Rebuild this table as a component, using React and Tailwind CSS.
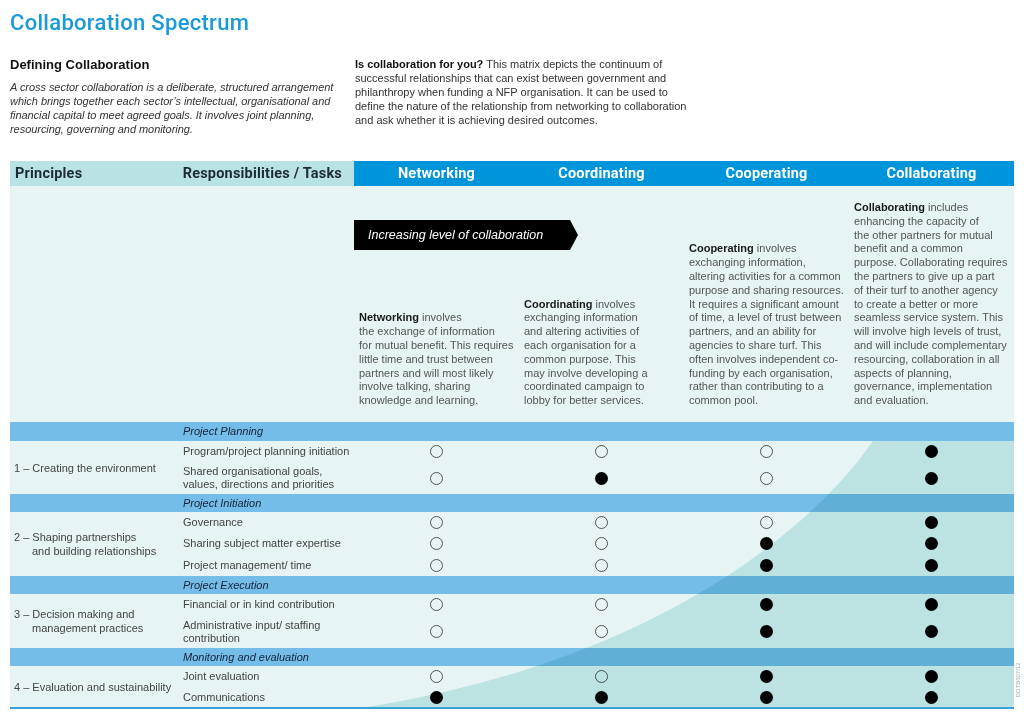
import React from "react";

const SANS = "font-['Liberation_Sans',Arial,sans-serif]";
const DIN = "font-['Roboto',sans-serif]";

const sections = [
  {
    band: "Project Planning",
    bandH: "h-[19px]",
    label: ["1 – Creating the environment"],
    tasks: [
      { t: ["Program/project planning initiation"], h: "h-[21px]", v: [0, 0, 0, 1] },
      { t: ["Shared organisational goals,", "values, directions and priorities"], h: "h-[32px]", v: [0, 1, 0, 1] },
    ],
  },
  {
    band: "Project Initiation",
    bandH: "h-[18px]",
    label: ["2 – Shaping partnerships", "and building relationships"],
    tasks: [
      { t: ["Governance"], h: "h-[21px]", v: [0, 0, 0, 1] },
      { t: ["Sharing subject matter expertise"], h: "h-[21px]", v: [0, 0, 1, 1] },
      { t: ["Project management/ time"], h: "h-[22px]", v: [0, 0, 1, 1] },
    ],
  },
  {
    band: "Project Execution",
    bandH: "h-[18px]",
    label: ["3 – Decision making and", "management practices"],
    tasks: [
      { t: ["Financial or in kind contribution"], h: "h-[21px]", v: [0, 0, 1, 1] },
      { t: ["Administrative input/ staffing", "contribution"], h: "h-[33px]", v: [0, 0, 1, 1] },
    ],
  },
  {
    band: "Monitoring and evaluation",
    bandH: "h-[18px]",
    label: ["4 – Evaluation and sustainability"],
    tasks: [
      { t: ["Joint evaluation"], h: "h-[21px]", v: [0, 0, 1, 1] },
      { t: ["Communications"], h: "h-[20px]", v: [1, 1, 1, 1] },
    ],
  },
];

function Dot({ filled }) {
  return filled ? (
    <div className="w-[13px] h-[13px] rounded-full bg-black" />
  ) : (
    <div className="w-[13px] h-[13px] rounded-full border border-[#555]" />
  );
}

function Desc({ name, rest, lines }) {
  return (
    <div className={`${SANS} text-[11px] leading-[13.8px] text-[#555] whitespace-nowrap`}>
      <div>
        <span className="font-bold text-[#1a1a1a]">{name}</span> {rest}
      </div>
      {lines.map((l, i) => (
        <div key={i}>{l}</div>
      ))}
    </div>
  );
}

export default function App() {
  return (
    <div className="relative w-[1024px] h-[718px] bg-white px-[10px] overflow-hidden">
      <h1 className={`${DIN} pt-[9px] text-[22px] leading-[28px] font-medium text-[#1a9bd7] tracking-[0.3px]`}>
        Collaboration Spectrum
      </h1>

      <div className="flex mt-[18px]">
        <div className="w-[345px]">
          <h2 className={`${SANS} font-bold text-[13px] leading-[20px] text-[#111]`}>
            Defining Collaboration
          </h2>
          <p className={`${SANS} italic text-[11px] leading-[14px] text-[#333] mt-[5px] whitespace-nowrap tracking-[-0.05px]`}>
            A cross sector collaboration is a deliberate, structured arrangement
            <br />
            which brings together each sector’s intellectual, organisational and
            <br />
            financial capital to meet agreed goals. It involves joint planning,
            <br />
            resourcing, governing and monitoring.
          </p>
        </div>
        <p className={`${SANS} text-[11px] leading-[14px] text-[#333] pt-[2px] whitespace-nowrap`}>
          <span className="font-bold text-[#111]">Is collaboration for you?</span> This matrix depicts the continuum of
          <br />
          successful relationships that can exist between government and
          <br />
          philanthropy when funding a NFP organisation. It can be used to
          <br />
          define the nature of the relationship from networking to collaboration
          <br />
          and ask whether it is achieving desired outcomes.
        </p>
      </div>

      {/* Table */}
      <div className="mt-[25px] w-[1004px]">
        {/* header */}
        <div className={`${DIN} flex h-[25px] text-[14.5px] font-bold tracking-[0.2px]`}>
          <div className="w-[344px] flex items-center justify-between bg-[#b9e2e4] text-[#1e2b36] pl-[5px] pr-[12px]">
            <span>Principles</span>
            <span>Responsibilities / Tasks</span>
          </div>
          <div className="flex-1 flex bg-[#0095da] text-white">
            {["Networking", "Coordinating", "Cooperating", "Collaborating"].map((h) => (
              <div key={h} className="w-[165px] flex items-center justify-center">
                {h}
              </div>
            ))}
          </div>
        </div>

        {/* description area */}
        <div className="flex h-[236px] bg-[#e6f4f4] pb-[14px]">
          <div className="w-[344px]" />
          <div className="w-[330px] flex flex-col">
            <div className="mt-[34px] w-[224px] h-[30px] bg-black flex items-center pl-[14px] [clip-path:polygon(0_0,calc(100%-8px)_0,100%_50%,calc(100%-8px)_100%,0_100%)]">
              <span className={`${SANS} italic text-[12.5px] text-white`}>Increasing level of collaboration</span>
            </div>
            <div className="flex-1 flex items-end">
              <div className="w-[165px] pl-[5px]">
                <Desc
                  name="Networking"
                  rest="involves"
                  lines={[
                    "the exchange of information",
                    "for mutual benefit. This requires",
                    "little time and trust between",
                    "partners and will most likely",
                    "involve talking, sharing",
                    "knowledge and learning.",
                  ]}
                />
              </div>
              <div className="w-[165px] pl-[5px]">
                <Desc
                  name="Coordinating"
                  rest="involves"
                  lines={[
                    "exchanging information",
                    "and altering activities of",
                    "each organisation for a",
                    "common purpose. This",
                    "may involve developing a",
                    "coordinated campaign to",
                    "lobby for better services.",
                  ]}
                />
              </div>
            </div>
          </div>
          <div className="w-[165px] pl-[5px] self-end">
            <Desc
              name="Cooperating"
              rest="involves"
              lines={[
                "exchanging information,",
                "altering activities for a common",
                "purpose and sharing resources.",
                "It requires a significant amount",
                "of time, a level of trust between",
                "partners, and an ability for",
                "agencies to share turf. This",
                "often involves independent co-",
                "funding by each organisation,",
                "rather than contributing to a",
                "common pool.",
              ]}
            />
          </div>
          <div className="w-[165px] pl-[5px] self-end">
            <Desc
              name="Collaborating"
              rest="includes"
              lines={[
                "enhancing the capacity of",
                "the other partners for mutual",
                "benefit and a common",
                "purpose. Collaborating requires",
                "the partners to give up a part",
                "of their turf to another agency",
                "to create a better or more",
                "seamless service system. This",
                "will involve high levels of trust,",
                "and will include complementary",
                "resourcing, collaboration in all",
                "aspects of planning,",
                "governance, implementation",
                "and evaluation.",
              ]}
            />
          </div>
        </div>

        {/* body */}
        <div className={`${SANS} relative bg-[#e6f4f4] border-b-2 border-[#3aa0d8]`}>
          {sections.map((s) => (
            <div key={s.band}>
              <div className={`flex ${s.bandH} items-center bg-[#74bde8]`}>
                <div className="w-[165px]" />
                <div className="pl-[8px] italic text-[11px] text-[#15243a]">{s.band}</div>
              </div>
              <div className="flex">
                <div className="w-[165px] flex flex-col justify-center pl-[4px] text-[11px] leading-[14px] text-[#444]">
                  {s.label.map((l, i) => (
                    <div key={i} className={i > 0 ? "pl-[18px]" : ""}>
                      {l}
                    </div>
                  ))}
                </div>
                <div className="flex flex-col">
                  {s.tasks.map((t, i) => (
                    <div key={i} className={`grid grid-cols-[179px_165px_165px_165px_165px] items-center ${t.h}`}>
                      <div className="pl-[8px] text-[11px] leading-[13px] text-[#444] whitespace-nowrap">
                        {t.t.map((l, j) => (
                          <div key={j}>{l}</div>
                        ))}
                      </div>
                      {t.v.map((f, k) => (
                        <div key={k} className="flex justify-center">
                          <Dot filled={f} />
                        </div>
                      ))}
                    </div>
                  ))}
                </div>
              </div>
            </div>
          ))}
          <svg
            className="absolute inset-0 w-full h-full pointer-events-none mix-blend-multiply"
            viewBox="0 0 1004 285"
            preserveAspectRatio="none"
          >
            <path d="M 863 19 C 800 110 640 240 357 285 L 1004 285 L 1004 19 Z" fill="#d1eded" />
          </svg>
        </div>
      </div>

      <div
        className={`${SANS} absolute left-[994px] top-[676px] w-[48px] h-[8px] flex items-center justify-center -rotate-90 text-[6px] leading-[8px] text-[#aaa] whitespace-nowrap`}
      >
        DOTB607/12
      </div>
    </div>
  );
}
